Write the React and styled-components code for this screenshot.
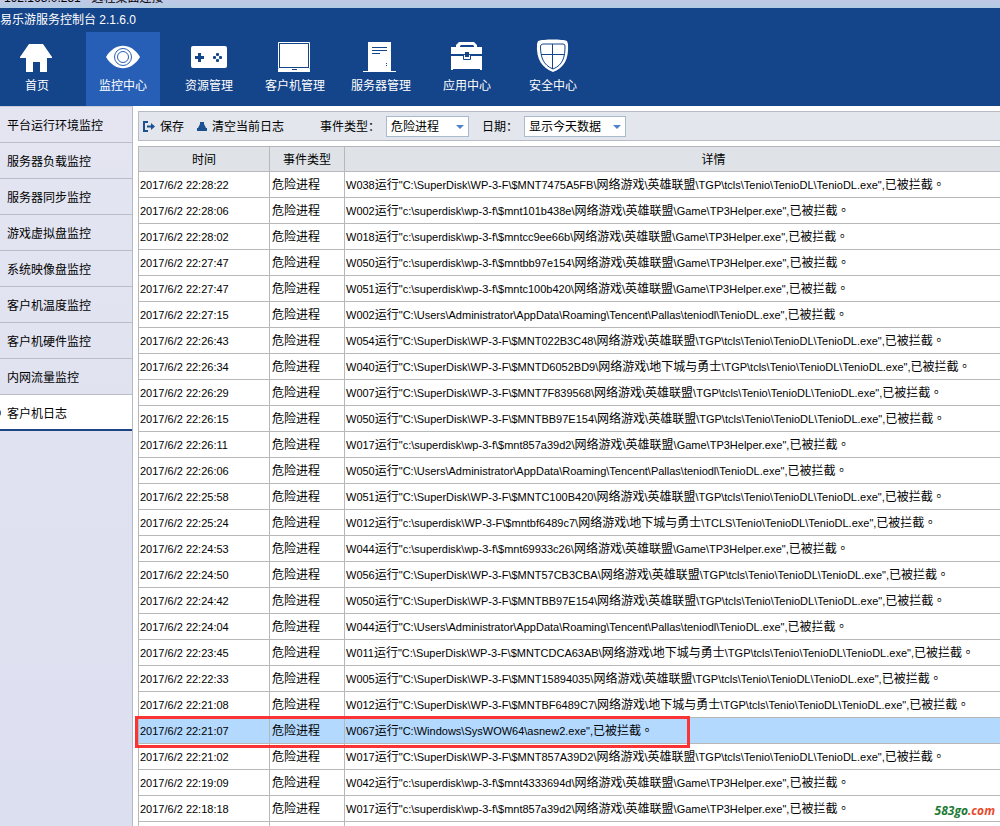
import styled, { createGlobalStyle } from "styled-components";

const menus = [
  { name: "首页", icon: "home" },
  { name: "监控中心", icon: "eye", active: true },
  { name: "资源管理", icon: "gamepad" },
  { name: "客户机管理", icon: "screen" },
  { name: "服务器管理", icon: "server" },
  { name: "应用中心", icon: "toolbox" },
  { name: "安全中心", icon: "shield" },
];

const sideItems = [
  "平台运行环境监控",
  "服务器负载监控",
  "服务器同步监控",
  "游戏虚拟盘监控",
  "系统映像盘监控",
  "客户机温度监控",
  "客户机硬件监控",
  "内网流量监控",
  "客户机日志",
];

const LOL = "网络游戏\\英雄联盟";
const DNF = "网络游戏\\地下城与勇士";
const TENIO = "TGP\\tcls\\Tenio\\TenioDL\\TenioDL.exe";
const HELPER = "Game\\TP3Helper.exe";
const PALLAS = "C:\\Users\\Administrator\\AppData\\Roaming\\Tencent\\Pallas\\teniodl\\TenioDL.exe";

const logs = [
  ["22:28:22", "W038", `C:\\SuperDisk\\WP-3-F\\$MNT7475A5FB\\${LOL}\\${TENIO}`],
  ["22:28:06", "W002", `c:\\superdisk\\wp-3-f\\$mnt101b438e\\${LOL}\\${HELPER}`],
  ["22:28:02", "W018", `c:\\superdisk\\wp-3-f\\$mntcc9ee66b\\${LOL}\\${HELPER}`],
  ["22:27:47", "W050", `c:\\superdisk\\wp-3-f\\$mntbb97e154\\${LOL}\\${HELPER}`],
  ["22:27:47", "W051", `c:\\superdisk\\wp-3-f\\$mntc100b420\\${LOL}\\${HELPER}`],
  ["22:27:15", "W002", PALLAS],
  ["22:26:43", "W054", `C:\\SuperDisk\\WP-3-F\\$MNT022B3C48\\${LOL}\\${TENIO}`],
  ["22:26:34", "W040", `C:\\SuperDisk\\WP-3-F\\$MNTD6052BD9\\${DNF}\\${TENIO}`],
  ["22:26:29", "W007", `C:\\SuperDisk\\WP-3-F\\$MNT7F839568\\${LOL}\\${TENIO}`],
  ["22:26:15", "W050", `C:\\SuperDisk\\WP-3-F\\$MNTBB97E154\\${LOL}\\${TENIO}`],
  ["22:26:11", "W017", `c:\\superdisk\\wp-3-f\\$mnt857a39d2\\${LOL}\\${HELPER}`],
  ["22:26:06", "W050", PALLAS],
  ["22:25:58", "W051", `C:\\SuperDisk\\WP-3-F\\$MNTC100B420\\${LOL}\\${TENIO}`],
  ["22:25:24", "W012", `c:\\superdisk\\WP-3-F\\$mntbf6489c7\\${DNF}\\TCLS\\Tenio\\TenioDL\\TenioDL.exe`],
  ["22:24:53", "W044", `c:\\superdisk\\wp-3-f\\$mnt69933c26\\${LOL}\\${HELPER}`],
  ["22:24:50", "W056", `C:\\SuperDisk\\WP-3-F\\$MNT57CB3CBA\\${LOL}\\${TENIO}`],
  ["22:24:42", "W050", `C:\\SuperDisk\\WP-3-F\\$MNTBB97E154\\${LOL}\\${TENIO}`],
  ["22:24:04", "W044", PALLAS],
  ["22:23:45", "W011", `C:\\SuperDisk\\WP-3-F\\$MNTCDCA63AB\\${DNF}\\${TENIO}`],
  ["22:22:33", "W005", `C:\\SuperDisk\\WP-3-F\\$MNT15894035\\${LOL}\\${TENIO}`],
  ["22:21:08", "W012", `C:\\SuperDisk\\WP-3-F\\$MNTBF6489C7\\${DNF}\\${TENIO}`],
  ["22:21:07", "W067", "C:\\Windows\\SysWOW64\\asnew2.exe", true],
  ["22:21:02", "W017", `C:\\SuperDisk\\WP-3-F\\$MNT857A39D2\\${LOL}\\${TENIO}`],
  ["22:19:09", "W042", `c:\\superdisk\\wp-3-f\\$mnt4333694d\\${LOL}\\${HELPER}`],
  ["22:18:18", "W017", `c:\\superdisk\\wp-3-f\\$mnt857a39d2\\${LOL}\\${HELPER}`],
];

// latin runs are set one size smaller than the chinese around them
const Mixed = ({ text }) =>
  text.split(/([\u4e00-\u9fff]+|。)/).map((part, i) => {
    if (part === "。") return <Stop key={i}>{part}</Stop>;
    return i % 2 ? <Han key={i}>{part}</Han> : part;
  });

const MenuIcon = ({ name }) => (
  <svg width="36" height="36" viewBox="0 0 36 36" fill="#fff" aria-hidden="true">
    {name === "home" && (
      <path d="M10 5h14l9 13v1h-5v14h-7V23h-7v10H7V19H1v-1z" />
    )}
    {name === "eye" && (
      <>
        <path d="M1 18C10 3 26 3 35 18C26 33 10 33 1 18z" />
        <g fill="none" stroke="#285fb6" strokeWidth="1">
          <circle cx="18" cy="18" r="8.500" />
          <circle cx="18" cy="18" r="5.500" />
        </g>
      </>
    )}
    {name === "gamepad" && (
      <>
        <rect x="0" y="7" width="36" height="22" rx="2" />
        <g fill="#144489">
          <path d="M7 14h3v3h3v3h-3v3H7v-3H4v-3h3z" />
          <rect x="25" y="14" width="3" height="3" rx="1" />
          <rect x="25" y="20" width="3" height="3" rx="1" />
          <rect x="22" y="17" width="3" height="3" rx="1" />
          <rect x="28" y="17" width="3" height="3" rx="1" />
        </g>
      </>
    )}
    {name === "screen" && (
      <>
        <path d="M1.5 3.500h31v26h-31z" fill="none" stroke="#fff" />
        <path d="M3 5h28v23H3zM1 30h14v1h5v-1h13v3H1z" />
      </>
    )}
    {name === "server" && (
      <>
        <path d="M5 3h23v29h5v1H0v-1h5z" />
        <path d="M9 8h15v1H9zM9 11h15v1H9zM9 14h8v1H9zM23 24h1v1h-1zM23 26h1v1h-1z" fill="#144489" />
      </>
    )}
    {name === "toolbox" && (
      <>
        <path d="M7 8V6l3-3h15l3 3v2h5v7H2V8zm4 0h14V7l-1-1H12l-1 1z" fillRule="evenodd" />
        <path d="M2 17h31v14h-2v-1H4v1H2z" />
        <path d="M14.500 15.500h7v5h-7z" fill="#fff" stroke="#144489" />
        <path d="M16 13h4v5h-4z" fill="#144489" />
      </>
    )}
    {name === "shield" && (
      <>
        <path d="M3 2C8 0 28 0 32 2L33 5C34 20 29 29 18 33C7 29 1 20 2 5z" />
        <path
          d="M5.500 7Q6 5 8 5h20q2 0 2 2C30 18 28 26 18 30C8 26 5.500 18 5.500 7zM17.500 5v25M6 15.500h24"
          fill="none"
          stroke="#144489"
        />
      </>
    )}
  </svg>
);

const App = () => {
  return (
    <Page>
      <GlobalStyle />
      <RemoteBar>192.168.0.251 - 远程桌面连接</RemoteBar>
      <Header>
        <AppTitle>易乐游服务控制台 2.1.6.0</AppTitle>
        <Nav>
          {menus.map((menu) => (
            <NavButton key={menu.name} $active={menu.active}>
              <MenuIcon name={menu.icon} />
              {menu.name}
            </NavButton>
          ))}
        </Nav>
      </Header>
      <Content>
        <SideBar>
          {sideItems.map((item) => (
            <SideLink key={item} href="#" $active={item === "客户机日志"}>
              {item}
            </SideLink>
          ))}
        </SideBar>
        <Main>
          <ToolBar>
            <ToolButton>
              <svg width="12" height="12" viewBox="0 0 12 12" aria-hidden="true">
                <path d="M5 1H1v9h4M4 5.500h5" fill="none" stroke="#1d4f91" strokeWidth="2" />
                <path d="M8 2l4 3.500L8 9z" fill="#1d4f91" />
              </svg>
              保存
            </ToolButton>
            <ToolButton>
              <svg width="10" height="12" viewBox="0 0 10 12" aria-hidden="true">
                <path d="M3 1h4v2l2 4H1l2-4zM0 7h10v3H0z" fill="#1d4f91" />
              </svg>
              清空当前日志
            </ToolButton>
            <Field>
              <label htmlFor="event-type">事件类型：</label>
              <SelectBox $width={83}>
                <select id="event-type">
                  <option>危险进程</option>
                </select>
              </SelectBox>
            </Field>
            <Field>
              <label htmlFor="log-date">日期：</label>
              <SelectBox $width={102}>
                <select id="log-date">
                  <option>显示今天数据</option>
                </select>
              </SelectBox>
            </Field>
          </ToolBar>
          <LogTable>
            <colgroup>
              <col width="132" />
              <col width="75" />
              <col />
            </colgroup>
            <thead>
              <tr>
                <th>时间</th>
                <th>事件类型</th>
                <th>详情</th>
              </tr>
            </thead>
            <tbody>
              {logs.map(([time, client, path, selected], i) => (
                <LogRow key={i} $selected={selected}>
                  <td>
                    2017/6/2 {time}
                    {selected && <RedFrame />}
                  </td>
                  <td>
                    <Mixed text="危险进程" />
                  </td>
                  <td>
                    <Mixed text={`${client}运行"${path}",已被拦截。`} />
                  </td>
                </LogRow>
              ))}
              <LogRow>
                <td />
                <td />
                <td />
              </LogRow>
            </tbody>
          </LogTable>
        </Main>
      </Content>
      <SiteMark>
        583go<span>.com</span>
      </SiteMark>
    </Page>
  );
};

export default App;

const GlobalStyle = createGlobalStyle`
  * {
    box-sizing: border-box;
  }
  body {
    margin: 0;
    font-family: "Liberation Sans", "Noto Sans CJK SC", sans-serif;
    font-size: 12px;
    line-height: 16px;
    color: #000;
    background: #fff;
  }
  button, select {
    font: inherit;
    color: inherit;
  }
`;

const Page = styled.div`
  position: relative;
  display: flex;
  flex-direction: column;
  height: 100vh;
  overflow: hidden;
`;

const RemoteBar = styled.div`
  display: flex;
  align-items: flex-end;
  flex-shrink: 0;
  height: 8px;
  padding: 0 4px 2px;
  overflow: hidden;
  background: linear-gradient(#c0c8e6, #b2cce4);
`;

const Header = styled.header`
  flex-shrink: 0;
  color: #fff;
  background: #144489;
`;

const AppTitle = styled.div`
  height: 24px;
  line-height: 24px;
`;

const Nav = styled.nav`
  display: flex;
  gap: 12px;
`;

const NavButton = styled.button`
  display: flex;
  flex-direction: column;
  align-items: center;
  gap: 3px;
  width: 74px;
  height: 74px;
  padding: 7px 0 0;
  border: 0;
  white-space: nowrap;
  background: ${(props) => (props.$active ? "#285fb6" : "transparent")};
`;

const Content = styled.div`
  display: flex;
  flex: 1;
  min-height: 0;
`;

const SideBar = styled.aside`
  flex-shrink: 0;
  width: 133px;
  border-top: 1px solid #c9cdda;
  border-right: 1px solid #b4b9c6;
  background: linear-gradient(#e4e5f1, #dcdff0);
`;

const SideLink = styled.a`
  position: relative;
  display: block;
  height: 36px;
  padding-left: 7px;
  line-height: 38px;
  color: #000;
  text-decoration: none;
  border-bottom: ${(props) => (props.$active ? "2px solid #1d4583" : "1px solid #b9bdc9")};
  background: ${(props) => (props.$active ? "#fff" : "transparent")};

  &::before {
    content: "";
    display: ${(props) => (props.$active ? "block" : "none")};
    position: absolute;
    left: -4px;
    top: 15px;
    width: 5px;
    height: 6px;
    border-radius: 3px;
    background: #3c5da0;
  }
`;

const Main = styled.main`
  flex: 1;
  min-width: 0;
  padding: 5px 0 0 5px;
  overflow: hidden;
`;

const ToolBar = styled.div`
  display: flex;
  align-items: center;
  height: 30px;
  margin-bottom: 5px;
  padding-left: 4px;
  border: 1px solid #b6bbc5;
  border-right: 0;
  background: #e3e6ec;
`;

const ToolButton = styled.button`
  display: flex;
  align-items: center;
  gap: 5px;
  margin-right: 13px;
  padding: 2px 0 0;
  border: 0;
  background: none;
`;

const Field = styled.div`
  display: flex;
  align-items: center;
  gap: 6px;
  margin-left: 23px;

  label {
    padding-top: 2px;
  }

  & + & {
    margin-left: 13px;
  }
`;

const SelectBox = styled.div`
  position: relative;
  width: ${(props) => props.$width}px;

  select {
    display: block;
    width: 100%;
    height: 21px;
    padding: 1px 4px 0;
    border: 1px solid #a9bace;
    border-radius: 0;
    appearance: none;
    background: #fff;
  }

  &::after {
    content: "";
    position: absolute;
    right: 5px;
    top: 9px;
    border: 4px solid transparent;
    border-top-color: #4f83cf;
    border-bottom: 0;
    pointer-events: none;
  }
`;

const LogTable = styled.table`
  width: 100%;
  min-width: 945px;
  table-layout: fixed;
  border-collapse: separate;
  border-spacing: 0;
  border-top: 1px solid #b2b6bb;

  th, td {
    height: 26px;
    padding: 0 2px;
    border-right: 1px solid #b8b8b8;
    border-bottom: 1px solid #b8b8b8;
    white-space: nowrap;
  }
  th:first-child, td:first-child {
    border-left: 1px solid #b8b8b8;
  }
  td:first-child, td:last-child {
    padding-left: 1px;
  }
  th {
    height: 25px;
    padding-top: 2px;
    font-weight: 400;
    background: #dfe3e7;
  }
`;

const LogRow = styled.tr`
  font-size: 11px;
  background: ${(props) => (props.$selected ? "#b3d9ff" : "#fff")};

  td {
    position: relative;
  }
`;

const RedFrame = styled.div`
  position: absolute;
  z-index: 1;
  left: -4px;
  top: -2px;
  width: 555px;
  height: 32px;
  border: 3px solid #fa3434;
`;

const Han = styled.span`
  font-size: 12px;
`;

const Stop = styled.span`
  font-family: "Noto Sans CJK TC", sans-serif;
  font-size: 12px;
`;

const SiteMark = styled.div`
  position: absolute;
  right: 5px;
  bottom: 7px;
  font: italic 700 12px/16px "Open Sans", sans-serif;
  color: #1b7a34;

  span {
    color: #e8492b;
  }
`;
